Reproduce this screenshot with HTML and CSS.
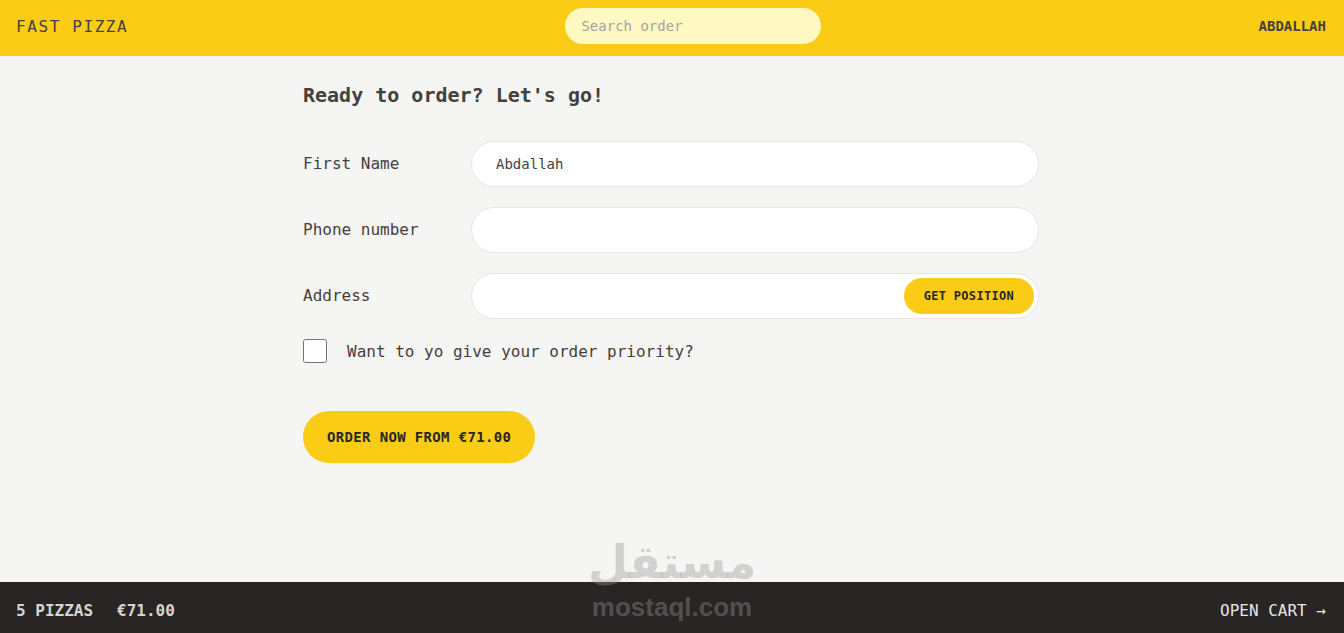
FILE: index.html
```html
<!DOCTYPE html>
<html lang="en">
<head>
  <meta charset="UTF-8">
  <meta name="viewport" content="width=device-width, initial-scale=1.0">
  <title>Fast React Pizza Co.</title>
  <link rel="stylesheet" href="styles.css">
</head>
<body>

  <div class="app">
    <header class="header">
      <a class="logo" href="#">Fast Pizza</a>
      <input class="search" type="text" placeholder="Search order">
      <div class="username">Abdallah</div>
    </header>

    <main class="main">
      <div class="create-order">
        <h2>Ready to order? Let's go!</h2>

        <form>
          <div class="row">
            <label>First Name</label>
            <input class="input" type="text" name="customer" value="Abdallah">
          </div>

          <div class="row">
            <label>Phone number</label>
            <input class="input" type="tel" name="phone">
          </div>

          <div class="row">
            <label>Address</label>
            <div class="field">
              <input class="input" type="text" name="address">
              <button type="button" class="btn-small">Get position</button>
            </div>
          </div>

          <div class="priority">
            <input class="check" type="checkbox" id="priority">
            <label for="priority">Want to yo give your order priority?</label>
          </div>

          <button type="button" class="btn-primary">Order now from €71.00</button>
        </form>
      </div>
    </main>

    <footer class="cart-overview">
      <p class="totals">
        <span class="count">5 pizzas</span>
        <span>€71.00</span>
      </p>
      <a class="open-cart" href="#">Open cart &rarr;</a>
    </footer>
  </div>

  <!-- watermark from the screenshot -->
  <div class="watermark">
    <div class="wm-ar">مستقل</div>
    <div class="wm-en">mostaql.com</div>
  </div>

</body>
</html>
```

FILE: styles.css
```css
* {
  box-sizing: border-box;
}

html, body {
  margin: 0;
  height: 100%;
  overflow: hidden;
}

body {
  font-family: "DejaVu Sans Mono", "Liberation Mono", monospace;
  background: #f5f5f4;
  color: #44403c;
}

a {
  color: inherit;
  text-decoration: none;
}

.app {
  display: grid;
  grid-template-rows: 56px 1fr 51px;
  height: 100vh;
}

/* header */
.header {
  display: flex;
  align-items: center;
  justify-content: space-between;
  padding: 8px 18px 12px 16px;
  background: #facc15;
  text-transform: uppercase;
}

.logo {
  font-size: 16px;
  letter-spacing: 0.1em;
  color: #44403c;
}

.search {
  width: 256px;
  height: 36px;
  border: none;
  border-radius: 9999px;
  background: #fef9c3;
  padding: 8px 16px;
  font-family: inherit;
  font-size: 14px;
  color: #44403c;
  outline: none;
}

.search::placeholder {
  color: #a8a29e;
}

.username {
  font-size: 14px;
  font-weight: 600;
  color: #44403c;
}

/* form */
.main {
  width: 768px;
  margin-left: calc(50% - 385px);
}

.create-order {
  padding: 25px 16px 24px;
}

.create-order h2 {
  margin: 0 0 32px;
  font-size: 20px;
  line-height: 28px;
  font-weight: 600;
}

.row {
  display: flex;
  align-items: center;
  gap: 8px;
  margin-bottom: 20px;
}

.row label {
  flex: 0 0 160px;
  font-size: 16px;
  line-height: 24px;
}

.field {
  position: relative;
  flex-grow: 1;
}

.input {
  flex-grow: 1;
  width: 100%;
  height: 46px;
  border: 1px solid #e7e5e4;
  border-radius: 9999px;
  background: #fff;
  padding: 12px 24px;
  font-family: inherit;
  font-size: 14px;
  color: #44403c;
  outline: none;
}

.btn-small {
  position: absolute;
  top: 5px;
  right: 5px;
  height: 36px;
  padding: 10px 20px;
  border: none;
  border-radius: 9999px;
  background: #facc15;
  font-family: inherit;
  font-size: 12px;
  line-height: 16px;
  font-weight: 600;
  letter-spacing: 0.025em;
  text-transform: uppercase;
  color: #292524;
}

.priority {
  display: flex;
  align-items: center;
  gap: 20px;
  margin-bottom: 48px;
}

.check {
  width: 24px;
  height: 24px;
  margin: 0;
  accent-color: #facc15;
}

.priority label {
  font-size: 16px;
  font-weight: 500;
}

.btn-primary {
  height: 52px;
  padding: 16px 24px;
  border: none;
  border-radius: 9999px;
  background: #facc15;
  font-family: inherit;
  font-size: 14px;
  line-height: 20px;
  font-weight: 600;
  letter-spacing: 0.025em;
  text-transform: uppercase;
  color: #292524;
}

/* cart footer */
.cart-overview {
  display: flex;
  justify-content: space-between;
  align-items: flex-start;
  padding: 17px 18px 0 16px;
  background: #292524;
  color: #e7e5e4;
  font-size: 16px;
  line-height: 24px;
  text-transform: uppercase;
}

.totals {
  margin: 0;
  display: flex;
  gap: 24px;
  font-weight: 600;
  color: #d6d3d1;
}

.watermark {
  position: absolute;
  left: 586px;
  top: 532px;
  width: 172px;
  text-align: center;
  color: rgba(150, 150, 150, 0.4);
  font-family: "Liberation Sans", "DejaVu Sans", sans-serif;
  font-weight: 700;
  pointer-events: none;
}

.wm-ar {
  font-family: "DejaVu Sans", sans-serif;
  font-size: 46px;
  line-height: 60px;
}

.wm-en {
  font-size: 26px;
  line-height: 30px;
}
```
